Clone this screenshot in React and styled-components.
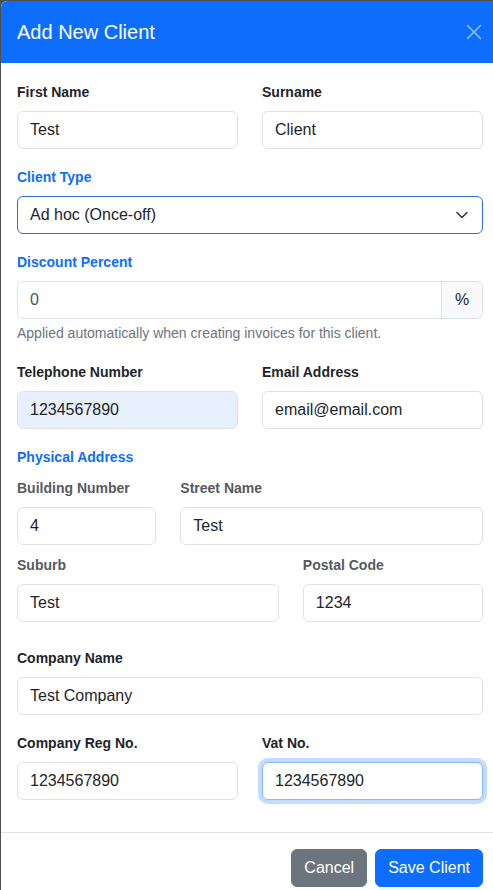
import React from 'react'
import styled, { createGlobalStyle } from 'styled-components'

const GlobalStyle = createGlobalStyle`
    html, body {
        margin: 0;
        padding: 0;
        background: #4f4f4f;
        overflow: hidden;
        font-family: "Liberation Sans", Arial, sans-serif;
    }
    * {
        box-sizing: border-box;
    }
`

const Modal = styled.div`
    margin: 1px 0 0 1px;
    width: 498px;
    height: 900px;
    background: #fff;
    border-radius: 6px 6px 0 0;
    overflow: hidden;
    display: flex;
    flex-direction: column;
`

const Header = styled.div`
    display: flex;
    align-items: center;
    justify-content: space-between;
    background: #0d6efd;
    padding: 16px;
    height: 62px;
`

const Title = styled.h5`
    margin: 0;
    font-size: 20px;
    font-weight: 400;
    line-height: 30px;
    color: #fff;
`

const CloseButton = styled.button`
    display: flex;
    align-items: center;
    justify-content: center;
    width: 18px;
    height: 18px;
    padding: 0;
    border: none;
    background: transparent;
    cursor: pointer;
`

const Body = styled.div`
    padding: 19px 16px 16px;
    border-bottom: 1px solid #dee2e6;
`

const Row = styled.div`
    display: grid;
    grid-template-columns: repeat(12, 1fr);
    column-gap: 24px;
    margin-bottom: ${({ $mb }) => $mb ?? 18}px;
`

const Col = styled.div`
    grid-column: span ${({ $span }) => $span || 12};
    min-width: 0;
`

const Label = styled.label`
    display: block;
    font-size: 14px;
    font-weight: 700;
    line-height: 21px;
    margin-bottom: 8px;
    color: ${({ $tone }) =>
        $tone === 'blue' ? '#0d6efd' : $tone === 'muted' ? '#555b61' : '#212529'};
`

const SectionTitle = styled.div`
    font-size: 14px;
    font-weight: 700;
    line-height: 21px;
    color: #0d6efd;
    margin-bottom: 10px;
`

const Input = styled.input`
    display: block;
    width: 100%;
    height: 38px;
    padding: 6px 12px;
    font-family: inherit;
    font-size: 16px;
    line-height: 24px;
    color: ${({ $muted }) => ($muted ? '#555' : '#212529')};
    background: ${({ $autofill }) => ($autofill ? '#e8f0fe' : '#fff')};
    border: 1px solid #dee2e6;
    border-radius: 6px;
    outline: none;
    caret-color: #212529;

    &:focus {
        border-color: #86b7fe;
        box-shadow: 0 0 0 4px rgba(13, 110, 253, 0.25);
    }
`

const SelectWrap = styled.div`
    position: relative;
`

const Select = styled.select`
    display: block;
    width: 100%;
    height: 38px;
    padding: 6px 36px 6px 12px;
    font-family: inherit;
    font-size: 16px;
    line-height: 24px;
    color: #212529;
    background: #fff;
    border: 1px solid #2f6fd0;
    border-radius: 6px;
    appearance: none;
    outline: none;
`

const Chevron = styled.svg`
    position: absolute;
    right: 15px;
    top: 15px;
    pointer-events: none;
`

const InputGroup = styled.div`
    display: flex;

    & > input {
        flex: 1;
        border-radius: 6px 0 0 6px;
    }
`

const Addon = styled.span`
    display: flex;
    align-items: center;
    justify-content: center;
    width: 41px;
    height: 38px;
    font-size: 16px;
    color: #212529;
    background: #f8f9fa;
    border: 1px solid #dee2e6;
    border-left: none;
    border-radius: 0 6px 6px 0;
`

const HelpText = styled.div`
    margin-top: 4px;
    font-size: 14px;
    line-height: 21px;
    color: #6c757d;
`

const Footer = styled.div`
    display: flex;
    justify-content: flex-end;
    gap: 8px;
    padding: 16px;
`

const Button = styled.button`
    height: 38px;
    padding: 6px 12px;
    font-family: inherit;
    font-size: 16px;
    line-height: 24px;
    color: #fff;
    background: ${({ $variant }) => ($variant === 'secondary' ? '#6c757d' : '#0d6efd')};
    border: 1px solid ${({ $variant }) => ($variant === 'secondary' ? '#6c757d' : '#0d6efd')};
    border-radius: 6px;
    cursor: pointer;
`

const Field = ({ label, span, tone, value, autofill, focus }) => (
    <Col $span={span}>
        <Label $tone={tone}>{label}</Label>
        <Input
            defaultValue={value}
            $autofill={autofill}
            autoFocus={focus}
            onFocus={(e) => {
                const len = e.target.value.length
                e.target.setSelectionRange(len, len)
            }}
        />
    </Col>
)

const App = () => {
    return (
        <>
            <GlobalStyle />
            <Modal>
                <Header>
                    <Title>Add New Client</Title>
                    <CloseButton aria-label="Close">
                        <svg width="16" height="16" viewBox="0 0 16 16">
                            <path d="M1.5 1.5 L14.5 14.5 M14.5 1.5 L1.5 14.5" stroke="rgba(255,255,255,0.55)" strokeWidth="1.6" strokeLinecap="round" />
                        </svg>
                    </CloseButton>
                </Header>
                <Body>
                    <Row>
                        <Field span={6} label="First Name" value="Test" />
                        <Field span={6} label="Surname" value="Client" />
                    </Row>
                    <Row>
                        <Col>
                            <Label $tone="blue">Client Type</Label>
                            <SelectWrap>
                                <Select defaultValue="adhoc">
                                    <option value="adhoc">Ad hoc (Once-off)</option>
                                    <option value="monthly">Monthly</option>
                                </Select>
                                <Chevron width="12" height="8" viewBox="0 0 12 8">
                                    <path d="M1 1.5 L6 6.5 L11 1.5" fill="none" stroke="#343a40" strokeWidth="1.6" strokeLinecap="round" strokeLinejoin="round" />
                                </Chevron>
                            </SelectWrap>
                        </Col>
                    </Row>
                    <Row>
                        <Col>
                            <Label $tone="blue">Discount Percent</Label>
                            <InputGroup>
                                <Input defaultValue="0" $muted />
                                <Addon>%</Addon>
                            </InputGroup>
                            <HelpText>Applied automatically when creating invoices for this client.</HelpText>
                        </Col>
                    </Row>
                    <Row>
                        <Field span={6} label="Telephone Number" value="1234567890" autofill />
                        <Field span={6} label="Email Address" value="email@email.com" />
                    </Row>
                    <SectionTitle>Physical Address</SectionTitle>
                    <Row $mb={10}>
                        <Field span={4} tone="muted" label="Building Number" value="4" />
                        <Field span={8} tone="muted" label="Street Name" value="Test" />
                    </Row>
                    <Row $mb={26}>
                        <Field span={7} tone="muted" label="Suburb" value="Test" />
                        <Field span={5} tone="muted" label="Postal Code" value="1234" />
                    </Row>
                    <Row>
                        <Field label="Company Name" value="Test Company" />
                    </Row>
                    <Row $mb={16}>
                        <Field span={6} label="Company Reg No." value="1234567890" />
                        <Field span={6} label="Vat No." value="1234567890" focus />
                    </Row>
                </Body>
                <Footer>
                    <Button $variant="secondary">Cancel</Button>
                    <Button>Save Client</Button>
                </Footer>
            </Modal>
        </>
    )
}

export default App
